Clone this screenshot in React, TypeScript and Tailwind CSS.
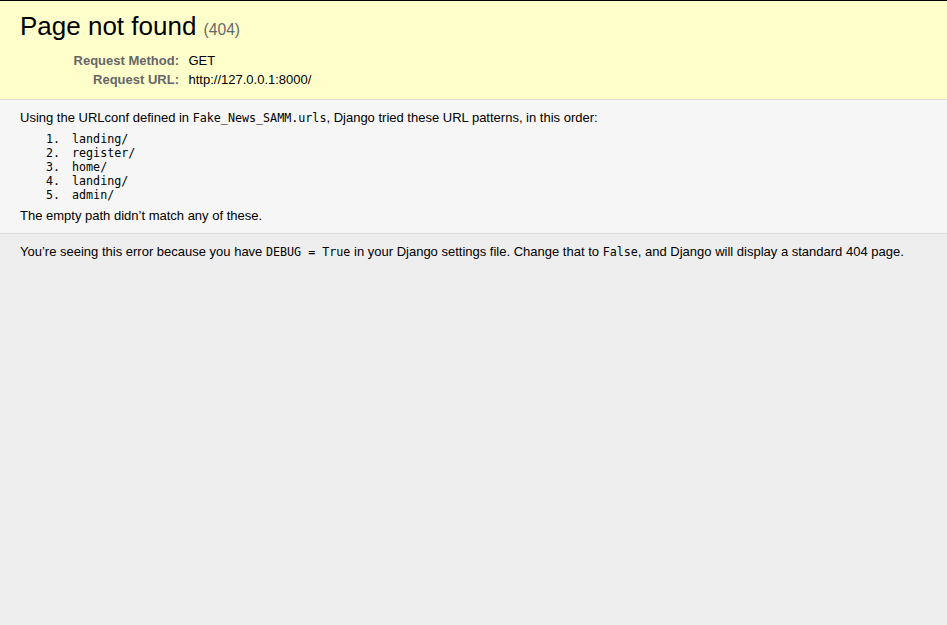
import React from "react";

const sans = "font-['Liberation_Sans',Helvetica,Arial,sans-serif]";
const mono = "font-['DejaVu_Sans_Mono',Menlo,monospace] text-[11.7px]";

const patterns = ["landing/", "register/", "home/", "landing/", "admin/"];

function Meta({ label, value }: { label: string; value: string }) {
  return (
    <tr>
      <th className="w-[156px] box-content py-[2px] pl-[3px] pr-[6.5px] text-right align-top font-bold text-[#666]">
        {label}:
      </th>
      <td className="py-[2px] px-[3px] align-top">{value}</td>
    </tr>
  );
}

export default function App() {
  return (
    <div className={`${sans} min-h-[625px] bg-[#eee] text-[13px] leading-[normal] text-black border-t border-black`}>
      <div id="summary" className="bg-[#ffc] border-b border-[#ddd] px-5 py-[10px]">
        <h1 className="text-[26px] font-normal leading-[normal] mb-[9.4px]">
          Page not found <span className="text-[15.6px] text-[#666]">(404)</span>
        </h1>
        <table className="w-full border-collapse">
          <tbody>
            <Meta label="Request Method" value="GET" />
            <Meta label="Request URL" value="http://127.0.0.1:8000/" />
          </tbody>
        </table>
      </div>

      <div id="info" className="bg-[#f6f6f6] border-b border-[#ddd] px-5 py-[10px]">
        <p>
          Using the URLconf defined in <code className={mono}>Fake_News_SAMM.urls</code>, Django tried
          these URL patterns, in this order:
        </p>
        <ol className="list-none my-[6.5px] mx-[52px]">
          {patterns.map((p, i) => (
            <li key={`${p}-${i}`} className={`${mono} leading-[14px] -ml-[26px] whitespace-pre`}>
              <span className="inline-block w-[26px]">{`${i + 1}.`}</span>
              {p}
            </li>
          ))}
        </ol>
        <p>The empty path didn’t match any of these.</p>
      </div>

      <div id="explanation" className="px-5 py-[10px]">
        <p>
          You’re seeing this error because you have <code className={mono}>DEBUG = True</code> in your
          Django settings file. Change that to <code className={mono}>False</code>, and Django will
          display a standard 404 page.
        </p>
      </div>
    </div>
  );
}
